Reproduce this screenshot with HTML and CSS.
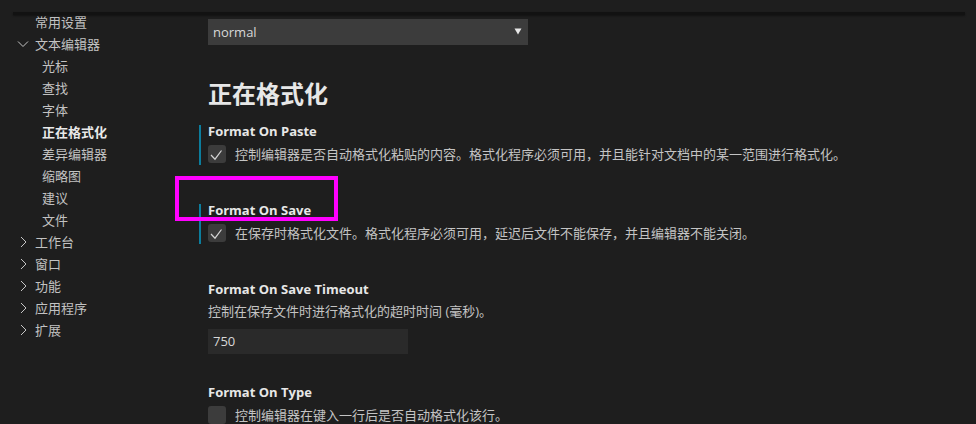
FILE: index.html
```html
<!DOCTYPE html>
<html lang="zh-CN">
<head>
<meta charset="utf-8">
<title>设置</title>
<link rel="stylesheet" href="styles.css">
</head>
<body>
<div class="editor">
  <div class="scroll-shadow"></div>
  <div class="layout">
    <nav class="toc">
      <div class="toc-row"><span class="chev"></span><span>常用设置</span></div>
      <div class="toc-row"><span class="chev"><svg width="12" height="12" viewBox="0 0 12 12"><path d="M1 3.5 L6 8.5 L11 3.5" fill="none" stroke="#c5c5c5" stroke-width="1"/></svg></span><span>文本编辑器</span></div>
      <div class="toc-row child">光标</div>
      <div class="toc-row child">查找</div>
      <div class="toc-row child">字体</div>
      <div class="toc-row child active">正在格式化</div>
      <div class="toc-row child">差异编辑器</div>
      <div class="toc-row child">缩略图</div>
      <div class="toc-row child">建议</div>
      <div class="toc-row child">文件</div>
      <div class="toc-row"><span class="chev"><svg width="12" height="12" viewBox="0 0 12 12"><path d="M4 1 L9 6 L4 11" fill="none" stroke="#c5c5c5" stroke-width="1"/></svg></span><span>工作台</span></div>
      <div class="toc-row"><span class="chev"><svg width="12" height="12" viewBox="0 0 12 12"><path d="M4 1 L9 6 L4 11" fill="none" stroke="#c5c5c5" stroke-width="1"/></svg></span><span>窗口</span></div>
      <div class="toc-row"><span class="chev"><svg width="12" height="12" viewBox="0 0 12 12"><path d="M4 1 L9 6 L4 11" fill="none" stroke="#c5c5c5" stroke-width="1"/></svg></span><span>功能</span></div>
      <div class="toc-row"><span class="chev"><svg width="12" height="12" viewBox="0 0 12 12"><path d="M4 1 L9 6 L4 11" fill="none" stroke="#c5c5c5" stroke-width="1"/></svg></span><span>应用程序</span></div>
      <div class="toc-row"><span class="chev"><svg width="12" height="12" viewBox="0 0 12 12"><path d="M4 1 L9 6 L4 11" fill="none" stroke="#c5c5c5" stroke-width="1"/></svg></span><span>扩展</span></div>
    </nav>
    <main class="content">
      <div class="select">
        <span>normal</span>
        <svg class="select-arrow" width="8" height="7" viewBox="0 0 8 7"><path d="M0.5 0.5 H7.5 L4 6.5 Z" fill="#e8e8e8"/></svg>
      </div>
      <h2 class="group-title">正在格式化</h2>

      <section class="setting modified">
        <div class="setting-title">Format On Paste</div>
        <div class="bool-row">
          <span class="checkbox"><svg width="18" height="18" viewBox="0 0 18 18"><path d="M3 10 L7 14.2 L13.5 5.5" fill="none" stroke="#d4d4d4" stroke-width="1.2"/></svg></span>
          <span class="desc">控制编辑器是否自动格式化粘贴的内容。格式化程序必须可用，并且能针对文档中的某一范围进行格式化。</span>
        </div>
      </section>

      <section class="setting modified">
        <div class="setting-title">Format On Save</div>
        <div class="bool-row">
          <span class="checkbox"><svg width="18" height="18" viewBox="0 0 18 18"><path d="M3 10 L7 14.2 L13.5 5.5" fill="none" stroke="#d4d4d4" stroke-width="1.2"/></svg></span>
          <span class="desc">在保存时格式化文件。格式化程序必须可用，延迟后文件不能保存，并且编辑器不能关闭。</span>
        </div>
      </section>

      <section class="setting">
        <div class="setting-title">Format On Save Timeout</div>
        <div class="desc plain">控制在保存文件时进行格式化的超时时间 (毫秒)。</div>
        <div class="number-input">750</div>
      </section>

      <section class="setting last">
        <div class="setting-title">Format On Type</div>
        <div class="bool-row">
          <span class="checkbox"></span>
          <span class="desc">控制编辑器在键入一行后是否自动格式化该行。</span>
        </div>
      </section>
    </main>
  </div>
  <div class="highlight-box"></div>
</div>
</body>
</html>
```

FILE: styles.css
```css
html, body {
  margin: 0;
  padding: 0;
  background: #1e1e1e;
  height: 100%;
  overflow: hidden;
}

.editor {
  position: relative;
  width: 976px;
  height: 424px;
  overflow: hidden;
  background: #1e1e1e;
  font-family: "Open Sans", "Noto Sans CJK SC", sans-serif;
  font-size: 13px;
  color: #cccccc;
}

.scroll-shadow {
  position: absolute;
  left: 13px;
  top: 12px;
  width: 952px;
  height: 3px;
  background: #121212;
  box-shadow: 0 1px 2px rgba(0, 0, 0, 0.4);
  z-index: 2;
}

.layout {
  display: flex;
  padding-top: 11px;
}

.toc {
  flex: none;
  width: 208px;
  display: flex;
  flex-direction: column;
}

.toc-row {
  display: flex;
  align-items: center;
  height: 22px;
  line-height: 22px;
  padding-left: 17px;
  color: #c2c2c2;
  white-space: nowrap;
}

.toc-row.child {
  padding-left: 42px;
}

.toc-row.active {
  color: #e9e9e9;
  font-weight: 700;
}

.chev {
  width: 12px;
  height: 12px;
  margin-right: 6px;
  display: flex;
  align-items: center;
  justify-content: center;
}

.content {
  flex: 1;
  padding-top: 8px;
}

.select {
  width: 320px;
  height: 26px;
  box-sizing: border-box;
  background: #3c3c3c;
  display: flex;
  align-items: center;
  justify-content: space-between;
  padding: 0 5px 0 5px;
  color: #d8d8d8;
}

.select-arrow {
  margin-right: 1px;
  margin-top: -1px;
}

.group-title {
  margin: 34px 0 0 0;
  font-size: 24px;
  line-height: 30px;
  font-weight: 600;
  color: #e7e7e7;
}

.setting {
  position: relative;
  padding: 12px 0 17px 0;
}

.setting:first-of-type {
  margin-top: 1px;
}

.setting.last {
  padding-bottom: 0;
}

.setting.modified::before {
  content: "";
  position: absolute;
  left: -9px;
  top: 15px;
  width: 2px;
  height: 40px;
  background: #0c7d9d;
}

.setting-title {
  font-weight: 700;
  line-height: 18px;
  height: 18px;
  color: #e7e7e7;
}

.bool-row {
  display: flex;
  align-items: center;
  margin-top: 5px;
  margin-bottom: 9px;
  height: 18px;
}

.setting.last .bool-row {
  margin-bottom: 0;
}

.checkbox {
  flex: none;
  width: 18px;
  height: 18px;
  border-radius: 3px;
  background: #3c3c3c;
  margin-right: 9px;
  display: flex;
}

.desc {
  line-height: 18px;
  color: #c4c4c4;
  white-space: nowrap;
}

.desc.plain {
  margin-top: 4px;
}

.number-input {
  margin-top: 9px;
  width: 200px;
  height: 25px;
  box-sizing: border-box;
  background: #2a2a2a;
  padding-left: 5px;
  line-height: 25px;
  color: #d8d8d8;
}

.highlight-box {
  position: absolute;
  left: 175px;
  top: 176px;
  width: 163px;
  height: 45px;
  box-sizing: border-box;
  border: 4px solid #ff00ff;
  z-index: 3;
}
```
